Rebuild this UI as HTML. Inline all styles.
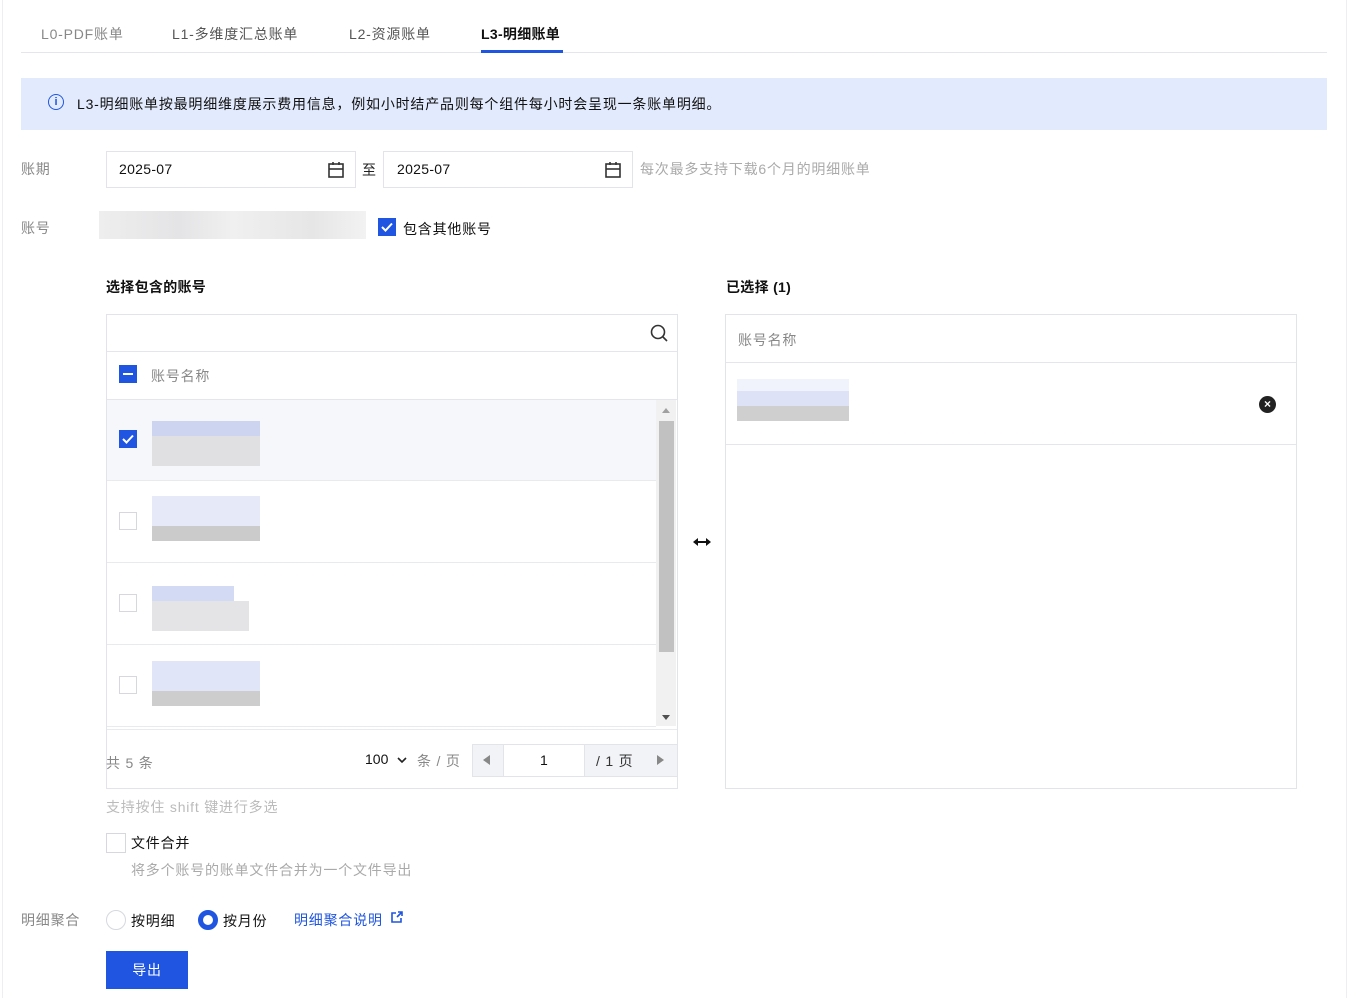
<!DOCTYPE html><html><head><meta charset="utf-8"><style>
body{margin:0;width:1351px;height:998px;background:#fff;position:relative;overflow:hidden;font-family:"Liberation Sans","Noto Sans CJK SC",sans-serif;font-size:14px;color:#000;letter-spacing:0.8px}
.a{position:absolute}
.g{color:#888}
.box{position:absolute;border:1px solid #e2e4ea;background:#fff}
.cb{position:absolute;width:18px;height:18px;border:1px solid #d6d8de;background:#fff;box-sizing:border-box}
.cbon{position:absolute;width:18px;height:18px;background:#1f55e0}
.blur{position:absolute}
</style></head><body>
<div class="a" style="left:2px;top:0;width:1px;height:998px;background:#eceef2"></div>
<div class="a" style="left:1346px;top:0;width:1px;height:998px;background:#eceef2"></div>
<div class="a g" style="left:41px;top:24px">L0-PDF账单</div>
<div class="a" style="left:172px;top:24px;color:#555">L1-多维度汇总账单</div>
<div class="a" style="left:349px;top:24px;color:#555">L2-资源账单</div>
<div class="a" style="left:481px;top:24px;font-weight:bold;color:#111;letter-spacing:0.3px">L3-明细账单</div>
<div class="a" style="left:21px;top:52px;width:1306px;height:1px;background:#e4e6eb"></div>
<div class="a" style="left:481px;top:50px;width:82px;height:3px;background:#1f55e0"></div>
<div class="a" style="left:21px;top:78px;width:1306px;height:52px;background:#e2eafd"></div>
<div class="a" style="left:48px;top:94px;width:14px;height:14px;border:1.5px solid #1f55e0;border-radius:50%;color:#1f55e0;font-size:11px;line-height:14px;text-align:center;font-weight:bold;letter-spacing:0">i</div>
<div class="a" style="left:77px;top:94px;color:#111">L3-明细账单按最明细维度展示费用信息，例如小时结产品则每个组件每小时会呈现一条账单明细。</div>
<div class="a g" style="left:21px;top:159px">账期</div>
<div class="box" style="left:106px;top:151px;width:248px;height:35px"></div>
<div class="a" style="left:119px;top:161px;color:#111;letter-spacing:0.3px">2025-07</div>
<svg class="a" style="left:327px;top:161px" width="18" height="18" viewBox="0 0 18 18" fill="none" stroke="#333" stroke-width="1.6"><rect x="2" y="3" width="14" height="13"/><line x1="2" y1="8" x2="16" y2="8"/><line x1="6" y1="1" x2="6" y2="4"/><line x1="12" y1="1" x2="12" y2="4"/></svg>
<div class="a" style="left:362px;top:160px;color:#222">至</div>
<div class="box" style="left:383px;top:151px;width:248px;height:35px"></div>
<div class="a" style="left:397px;top:161px;color:#111;letter-spacing:0.3px">2025-07</div>
<svg class="a" style="left:604px;top:161px" width="18" height="18" viewBox="0 0 18 18" fill="none" stroke="#333" stroke-width="1.6"><rect x="2" y="3" width="14" height="13"/><line x1="2" y1="8" x2="16" y2="8"/><line x1="6" y1="1" x2="6" y2="4"/><line x1="12" y1="1" x2="12" y2="4"/></svg>
<div class="a" style="left:640px;top:159px;color:#aaa">每次最多支持下载6个月的明细账单</div>
<div class="a g" style="left:21px;top:218px">账号</div>
<div class="blur" style="left:99px;top:211px;width:267px;height:28px;background:linear-gradient(90deg,#eee,#e4e4e6 30%,#f0f0f0 50%,#e6e6e6 80%,#f2f2f2)"></div>
<div class="cbon" style="left:378px;top:218px"></div>
<svg class="a" style="left:378px;top:218px" width="18" height="18"><path d="M4 9l3.5 3.5L14 5.5" stroke="#fff" stroke-width="2" fill="none"/></svg>
<div class="a" style="left:403px;top:219px;color:#111">包含其他账号</div>
<div class="a" style="left:106px;top:277px;font-weight:bold;color:#111;letter-spacing:0.3px">选择包含的账号</div>
<div class="box" style="left:106px;top:314px;width:570px;height:473px"></div>
<svg class="a" style="left:649px;top:323px" width="20" height="20" fill="none" stroke="#333" stroke-width="1.6"><circle cx="9" cy="9" r="6.5"/><line x1="14" y1="14" x2="18" y2="18"/></svg>
<div class="a" style="left:107px;top:351px;width:570px;height:1px;background:#e4e6eb"></div>
<div class="cbon" style="left:119px;top:365px"></div>
<div class="a" style="left:123px;top:373px;width:10px;height:2px;background:#fff"></div>
<div class="a g" style="left:151px;top:366px">账号名称</div>
<div class="a" style="left:107px;top:399px;width:570px;height:1px;background:#e4e6eb"></div>
<div class="a" style="left:107px;top:400px;width:549px;height:80px;background:#f5f7fb"></div>
<div class="a" style="left:107px;top:480px;width:549px;height:1px;background:#e8eaee"></div>
<div class="a" style="left:107px;top:562px;width:549px;height:1px;background:#e8eaee"></div>
<div class="a" style="left:107px;top:644px;width:549px;height:1px;background:#e8eaee"></div>
<div class="a" style="left:107px;top:726px;width:549px;height:1px;background:#e8eaee"></div>
<div class="a" style="left:107px;top:729px;width:570px;height:1px;background:#e8eaee"></div>
<div class="cbon" style="left:119px;top:430px"></div>
<svg class="a" style="left:119px;top:430px" width="18" height="18"><path d="M4 9l3.5 3.5L14 5.5" stroke="#fff" stroke-width="2" fill="none"/></svg>
<div class="cb" style="left:119px;top:512px"></div>
<div class="cb" style="left:119px;top:594px"></div>
<div class="cb" style="left:119px;top:676px"></div>
<div class="blur" style="left:152px;top:421px;width:108px;height:15px;background:#cdd4f0"></div><div class="blur" style="left:152px;top:436px;width:108px;height:30px;background:#e0e0e2"></div>
<div class="blur" style="left:152px;top:496px;width:108px;height:30px;background:#e5e9f8"></div><div class="blur" style="left:152px;top:526px;width:108px;height:15px;background:#cbcbcb"></div>
<div class="blur" style="left:152px;top:586px;width:82px;height:15px;background:#d3daf3"></div><div class="blur" style="left:152px;top:601px;width:97px;height:30px;background:#e4e4e6"></div>
<div class="blur" style="left:152px;top:661px;width:108px;height:30px;background:#e0e6f8"></div><div class="blur" style="left:152px;top:691px;width:108px;height:15px;background:#cdcdcd"></div>
<div class="a" style="left:656px;top:400px;width:20px;height:326px;background:#f1f1f1"></div>
<div class="a" style="left:659px;top:421px;width:15px;height:231px;background:#c1c1c1"></div>
<div class="a" style="left:662px;top:408px;border:4px solid transparent;border-bottom:5px solid #a0a0a0;border-top:0"></div>
<div class="a" style="left:662px;top:715px;border:4px solid transparent;border-top:5px solid #505050;border-bottom:0"></div>
<div class="a g" style="left:106px;top:753px">共 5 条</div>
<div class="a" style="left:365px;top:751px;color:#111;letter-spacing:0">100</div>
<svg class="a" style="left:396px;top:755px" width="12" height="10" fill="none" stroke="#222" stroke-width="1.6"><path d="M2 3l4 4 4-4"/></svg>
<div class="a g" style="left:417px;top:751px">条 / 页</div>
<div class="a" style="left:472px;top:744px;width:204px;height:31px;border:1px solid #e2e4ea;background:#f2f3f6"></div>
<div class="a" style="left:503px;top:745px;width:80px;height:31px;background:#fff;border-left:1px solid #e2e4ea;border-right:1px solid #e2e4ea"></div>
<div class="a" style="left:540px;top:752px;color:#111">1</div>
<div class="a" style="left:596px;top:751px;color:#333">/ 1 页</div>
<div class="a" style="left:483px;top:755px;border:5px solid transparent;border-right:7px solid #888;border-left:0"></div>
<div class="a" style="left:657px;top:755px;border:5px solid transparent;border-left:7px solid #888;border-right:0"></div>
<svg class="a" style="left:692px;top:536px" width="20" height="12"><path d="M4 6h12" stroke="#111" stroke-width="2"/><path d="M1 6l5-4v8zM19 6l-5-4v8z" fill="#111"/></svg>
<div class="a" style="left:726px;top:277px;font-weight:bold;color:#111;letter-spacing:0.3px">已选择 (1)</div>
<div class="box" style="left:725px;top:314px;width:570px;height:473px"></div>
<div class="a g" style="left:738px;top:330px">账号名称</div>
<div class="a" style="left:726px;top:362px;width:570px;height:1px;background:#e4e6eb"></div>
<div class="a" style="left:726px;top:444px;width:570px;height:1px;background:#e4e6eb"></div>
<div class="blur" style="left:737px;top:379px;width:112px;height:12px;background:#f0f2fc"></div><div class="blur" style="left:737px;top:391px;width:112px;height:15px;background:#dde2f6"></div><div class="blur" style="left:737px;top:406px;width:112px;height:15px;background:#cfcfcf"></div>
<div class="a" style="left:1259px;top:396px;width:17px;height:17px;border-radius:50%;background:#222;color:#fff;font-size:12px;line-height:17px;text-align:center;font-weight:bold;letter-spacing:0">×</div>
<div class="a" style="left:106px;top:797px;color:#bbb">支持按住 shift 键进行多选</div>
<div class="cb" style="left:106px;top:833px;width:20px;height:20px"></div>
<div class="a" style="left:131px;top:833px;color:#111">文件合并</div>
<div class="a" style="left:131px;top:860px;color:#aaa">将多个账号的账单文件合并为一个文件导出</div>
<div class="a g" style="left:21px;top:910px">明细聚合</div>
<div class="a" style="left:106px;top:910px;width:20px;height:20px;border:1px solid #d6d8de;border-radius:50%;box-sizing:border-box"></div>
<div class="a" style="left:131px;top:911px;color:#111">按明细</div>
<div class="a" style="left:198px;top:910px;width:20px;height:20px;border:5px solid #1f55e0;border-radius:50%;box-sizing:border-box"></div>
<div class="a" style="left:223px;top:911px;color:#111">按月份</div>
<div class="a" style="left:294px;top:910px;color:#1f55e0">明细聚合说明</div>
<svg class="a" style="left:390px;top:911px" width="13" height="13" fill="none" stroke="#1f55e0" stroke-width="1.6"><path d="M6 2H2v9h9V7M7 6l5-5M8 1h4v4"/></svg>
<div class="a" style="left:106px;top:951px;width:82px;height:38px;background:#1f55e0;color:#fff;text-align:center;line-height:38px">导出</div>
</body></html>
